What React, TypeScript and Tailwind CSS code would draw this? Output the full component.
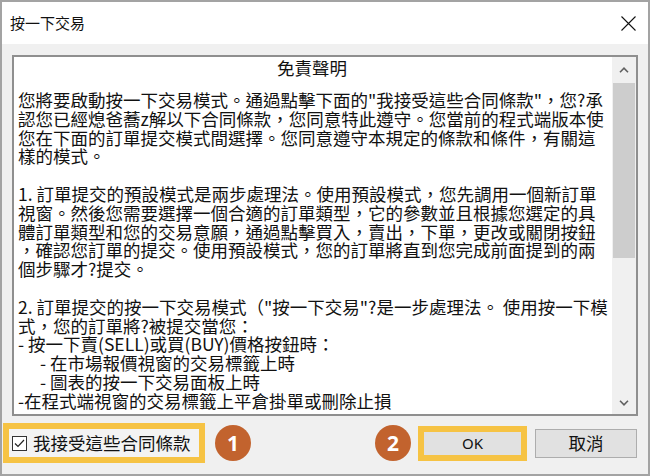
import React from 'react';

const CJK = "font-['Noto_Sans_CJK_TC','Noto_Sans',sans-serif]";

type Line = { text: string; indent?: boolean };

const LINES: Line[] = [
  { text: '您將要啟動按一下交易模式。通過點擊下面的"我接受這些合同條款"，您?承' },
  { text: '認您已經熄爸蕎z解以下合同條款，您同意特此遵守。您當前的程式端版本使' },
  { text: '您在下面的訂單提交模式間選擇。您同意遵守本規定的條款和條件，有關這' },
  { text: '樣的模式。' },
  { text: '' },
  { text: '1. 訂單提交的預設模式是兩步處理法。使用預設模式，您先調用一個新訂單' },
  { text: '視窗。然後您需要選擇一個合適的訂單類型，它的參數並且根據您選定的具' },
  { text: '體訂單類型和您的交易意願，通過點擊買入，賣出，下單，更改或關閉按鈕' },
  { text: '，確認您訂單的提交。使用預設模式，您的訂單將直到您完成前面提到的兩' },
  { text: '個步驟才?提交。' },
  { text: '' },
  { text: '2. 訂單提交的按一下交易模式（"按一下交易"?是一步處理法。 使用按一下模' },
  { text: '式，您的訂單將?被提交當您：' },
  { text: '- 按一下賣(SELL)或買(BUY)價格按鈕時：' },
  { text: '- 在市場報價視窗的交易標籤上時', indent: true },
  { text: '- 圖表的按一下交易面板上時', indent: true },
  { text: '-在程式端視窗的交易標籤上平倉掛單或刪除止損' },
];

function Chevron({ down = false }: { down?: boolean }) {
  return (
    <svg width="10" height="6" viewBox="0 0 10 6" className={down ? 'rotate-180' : ''}>
      <path d="M1 5.2 L5 1.2 L9 5.2" fill="none" stroke="#606060" strokeWidth="1.6" />
    </svg>
  );
}

function Badge({ n }: { n: number }) {
  return (
    <div className="w-[36px] h-[36px] rounded-full bg-[#c2632e] flex items-center justify-center shrink-0">
      <span className="text-white text-[21px] font-bold font-['Open_Sans',sans-serif] leading-none">{n}</span>
    </div>
  );
}

export default function App() {
  return (
    <div className={`w-[650px] h-[476px] flex flex-col bg-[#f0f0f0] border-2 border-[#a3a3a3] ${CJK}`}>
      {/* Title bar */}
      <div className="h-[42px] bg-white flex items-center justify-between pl-[8px] pr-[12px] shrink-0">
        <span className="text-[15px] text-[#111]">按一下交易</span>
        <svg width="15" height="15" viewBox="0 0 15 15">
          <path d="M0.5 0.5 L14.5 14.5 M14.5 0.5 L0.5 14.5" stroke="#111" strokeWidth="1.1" />
        </svg>
      </div>

      {/* Disclaimer box */}
      <div className="mx-[10px] mt-[11px] h-[361px] flex border-2 border-[#8f8f8f] shrink-0">
        <div className="flex-1 bg-white overflow-hidden pl-[4px] pt-[2px] text-[17.5px] leading-[18.8px] text-[#111]">
          <div className="h-[19px] text-center pr-[6px] mb-[13px]">免責聲明</div>
          {LINES.map((l, i) => (
            <div key={i} className={`h-[18.8px] whitespace-nowrap ${l.indent ? 'pl-[22px]' : ''}`}>
              {l.text}
            </div>
          ))}
        </div>
        <div className="w-[24px] bg-[#f0f0f0] flex flex-col">
          <div className="h-[26px] flex items-center justify-center">
            <Chevron />
          </div>
          <div className="h-[175px] mx-px bg-[#cdcdcd]" />
          <div className="flex-1" />
          <div className="h-[22px] flex items-center justify-center">
            <Chevron down />
          </div>
        </div>
      </div>

      {/* Bottom row */}
      <div className="mt-[7px] pl-[1px] pr-[11px] flex items-center">
        <div className="w-[202px] h-[40px] border-[6px] border-[#f6c344] bg-[#f3f3f3] flex items-center pl-[3px] gap-[6px]">
          <svg width="15" height="15" viewBox="0 0 15 15" className="shrink-0">
            <rect x="0.5" y="0.5" width="14" height="14" fill="#fff" stroke="#333" />
            <path d="M3 7.5 L6 10.5 L12 4" fill="none" stroke="#222" strokeWidth="1.2" />
          </svg>
          <span className="text-[17.5px] leading-none text-[#111] whitespace-nowrap">我接受這些合同條款</span>
        </div>
        <div className="ml-[10px]">
          <Badge n={1} />
        </div>
        <div className="flex-1" />
        <Badge n={2} />
        <div className="ml-[7px] w-[109px] h-[35px] border-[6px] border-[#f6c344] bg-[#e1e1e1] flex items-center justify-center">
          <span className="text-[15px] text-[#111] font-['Noto_Sans',sans-serif]">OK</span>
        </div>
        <div className="ml-[8px] w-[102px] h-[29px] border border-[#adadad] bg-[#e1e1e1] flex items-center justify-center">
          <span className="text-[17.5px] leading-none text-[#111]">取消</span>
        </div>
      </div>
    </div>
  );
}
